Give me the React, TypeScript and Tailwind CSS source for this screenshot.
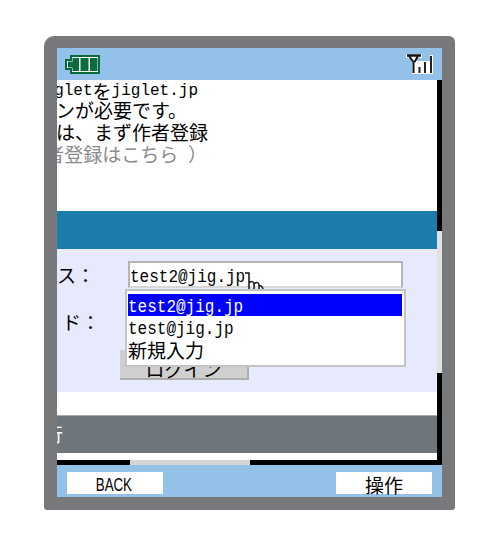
const mono = "font-['Liberation_Mono','Noto_Sans_CJK_JP',monospace] text-[16px] leading-[22px]";
const tall = "inline-block scale-y-[1.15] origin-center";
const ja = "font-['Noto_Sans_CJK_JP','Liberation_Mono',sans-serif] text-[19px] leading-[22px]";
const jaUp = "font-['Noto_Sans_CJK_JP','Liberation_Mono',sans-serif] text-[19px] leading-[16px]";
const jaDown = "font-['Noto_Sans_CJK_JP','Liberation_Mono',sans-serif] text-[19px] leading-[18px]";

function Battery() {
  return (
    <svg width="35" height="19" viewBox="0 0 35 19" fill="none">
      <path d="M6 1H34V18H6V14H1V5H6Z" stroke="#0a6b3c" strokeWidth="2" fill="#fff" />
      <path d="M3 6.5H7.5V3H14V16H7.5V12.500H3Z" fill="#0a6b3c" />
      <rect x="15.500" y="3" width="8" height="13" fill="#0a6b3c" />
      <rect x="25" y="3" width="7.500" height="13" fill="#0a6b3c" />
    </svg>
  );
}

function Signal() {
  return (
    <svg width="28" height="20" viewBox="0 0 28 20" fill="none">
      <path d="M8 7H27V20H8Z" fill="#fff" />
      <path d="M24 1H27V7H24Z" fill="#fff" />
      <path d="M0 0H16V4H11V20H6V4H0Z" fill="#fff" />
      <path d="M1 1.5H15" stroke="#111" strokeWidth="2.5" />
      <path d="M3 2L7.5 8V19M12 2L8.5 8" stroke="#111" strokeWidth="2" />
      <rect x="12.500" y="13" width="2" height="6" fill="#222" />
      <rect x="18" y="8" width="2" height="11" fill="#222" />
      <rect x="24" y="2" width="2" height="17" fill="#222" />
    </svg>
  );
}

function Hand() {
  return (
    <svg width="22" height="20" viewBox="0 0 22 20" fill="none" className="absolute left-[113px] top-[9px]">
      <path d="M2 1H6V18M6 11C8 9 11 9 11 12V18M11 12C13 10 16 10 16 13V18M16 14C18 13 20 15 20 18" stroke="#111" strokeWidth="1.5" fill="#fff" />
    </svg>
  );
}

function TextLine({ children, gray, width }: { children: React.ReactNode; gray?: boolean; width: string }) {
  return (
    <div className={`${width} flex justify-end whitespace-nowrap h-[22px] ${gray ? "text-[#8a8a8a]" : "text-black"}`}>
      {children}
    </div>
  );
}

export default function App() {
  return (
    <div className="w-[502px] h-[550px] bg-white pt-[36px] pl-[44px]">
      <div className="w-[411px] h-[474px] bg-[#77797c] rounded-tl-[10px] rounded-tr-[6px] rounded-bl-[3px] rounded-br-[3px] pt-[12px] pl-[13px]">
        <div className="w-[385px] h-[449px] flex flex-col overflow-hidden">
          <div className="h-[32px] bg-[#93c1e8] flex items-center justify-between pl-[8px] pr-[8px]">
            <Battery />
            <Signal />
          </div>

          <div className="flex h-[385px]">
            <div className="w-[380px] flex flex-col bg-white">
              <div className="h-[131px] overflow-hidden">
                <TextLine width="w-[141px]"><span className={mono}>glet</span><span className={ja}>を</span><span className={mono}>jiglet.jp</span></TextLine>
                <TextLine width="w-[130px]"><span className={jaUp}>インが必要です。</span></TextLine>
                <TextLine width="w-[151px]"><span className={jaUp}>は、まず作者登録</span></TextLine>
                <TextLine width="w-[150px]" gray><span className={jaUp}>作者登録はこちら</span><span className={mono}>&nbsp;</span><span className={jaUp}>）</span></TextLine>
              </div>

              <div className="h-[38px] bg-[#1c7dac]" />

              <div className="h-[143px] bg-[#e6eafc] relative">
                <div className="flex items-center pt-[12px] h-[39px]">
                  <div className="w-[71px] flex justify-start"><span className={`${ja} text-black`}>ス：</span></div>
                  <div className="relative w-[275px] h-[27px] bg-white border-2 border-[#b4b4b4] border-b-[#d8d8d8] flex items-center">
                    <span className={`${mono} ${tall} text-black pt-[4px]`}>test2@jig.jp</span>
                    <Hand />
                  </div>
                </div>
                <div className="mt-[23px] pl-[5px] h-[22px]">
                  <span className={`${ja} text-black`}>ド：</span>
                </div>
                <div className="ml-[63px] mt-[17px] w-[129px] h-[30px] bg-[#cfcfcf] border-b-2 border-r-2 border-[#aeaeae] flex items-end justify-center">
                  <span className={`${jaDown} text-black`}>ログイン</span>
                </div>

                <div className="absolute left-[68px] top-[40px] w-[281px] h-[78px] bg-white border-2 border-[#c4c4c4] pt-[3px] pl-[1px] pr-[2px]">
                  <div className={`${mono} h-[22px] bg-[#0000ff] text-white pt-[2px]`}><span className={tall}>test2@jig.jp</span></div>
                  <div className={`${mono} h-[23px] pt-[2px] text-black`}><span className={tall}>test@jig.jp</span></div>
                  <div className={`${ja} text-black`}>新規入力</div>
                </div>
              </div>

              <div className="h-[24px] bg-white border-b border-[#a8acb0]" />
              <div className="h-[37px] bg-[#6e757c] overflow-hidden">
                <div className="w-[6px] flex justify-end whitespace-nowrap pt-[7px]">
                  <span className={`${ja} text-white`}>行</span>
                </div>
              </div>
              <div className="h-[7px] bg-white" />
              <div className="h-[5px] bg-black pl-[73px]">
                <div className="w-[120px] h-[5px] bg-[#d4d4d4]" />
              </div>
            </div>

            <div className="w-[5px] bg-black pt-[151px]">
              <div className="h-[142px] bg-[#e2e2e2]" />
            </div>
          </div>

          <div className="h-[32px] bg-[#93c1e8] flex justify-between pl-[10px] pr-[10px] pt-[7px]">
            <div className="w-[96px] h-[22px] bg-white flex justify-center items-end pr-[3px]">
              <span className="font-['Liberation_Sans',sans-serif] text-[19px] leading-[18px] scale-x-[0.7] text-black">BACK</span>
            </div>
            <div className="w-[96px] h-[22px] bg-white flex justify-center items-end">
              <span className={`${jaDown} text-black`}>操作</span>
            </div>
          </div>
        </div>
      </div>
    </div>
  );
}
